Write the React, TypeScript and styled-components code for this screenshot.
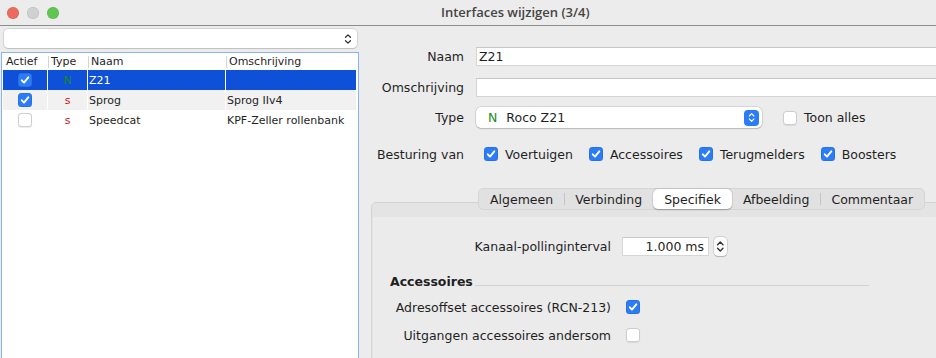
import styled, { createGlobalStyle } from "styled-components";

const GlobalStyle = createGlobalStyle`
  html, body {
    margin: 0;
    padding: 0;
    background: #ececec;
  }
  body {
    font-family: "DejaVu Sans", "Noto Sans", sans-serif;
    color: #1f1f1f;
  }
  * {
    box-sizing: border-box;
  }
`;

const Window = styled.div`
  width: 936px;
  height: 358px;
  overflow: hidden;
  display: flex;
  flex-direction: column;
  background: #ececec;
`;

const TitleBar = styled.header`
  flex: none;
  height: 26px;
  display: flex;
  align-items: center;
  padding-left: 7px;
  border-bottom: 1px solid #8d8d8d;
`;

const Lights = styled.div`
  display: flex;
  gap: 8px;
`;

const Light = styled.span<{ $color: string }>`
  width: 12px;
  height: 12px;
  border-radius: 50%;
  background: ${(p) => p.$color};
  box-shadow: inset 0 0 0 0.5px rgba(0, 0, 0, 0.12);
`;

const Title = styled.h1`
  margin: 0 0 1px 382px;
  font-family: "Open Sans", sans-serif;
  font-weight: 600;
  font-size: 13px;
  color: #444;
`;

const Body = styled.div`
  flex: 1;
  display: flex;
  min-height: 0;
`;

/* ---------- left: interface list ---------- */

const Sidebar = styled.aside`
  width: 360px;
  flex: none;
  display: flex;
  flex-direction: column;
  padding: 3px 1px 0;
`;

const FilterSelect = styled.div`
  flex: none;
  height: 19px;
  margin: 0 2px 0 3px;
  background: #fff;
  border-radius: 4px;
  box-shadow: 0 0 0 0.5px rgba(0, 0, 0, 0.2), 0 1px 1px rgba(0, 0, 0, 0.1);
  display: flex;
  align-items: center;
  justify-content: flex-end;
  padding-right: 5px;
`;

const Table = styled.div`
  flex: 1;
  margin: 4px 0 -6px;
  background: #fff;
  border: 1px solid #86b5f1;
  padding: 0 2px 0 1px;
`;

const Row = styled.div<{ $header?: boolean; $bg?: string }>`
  display: grid;
  grid-template-columns: 45px 40px 138px 1fr;
  height: ${(p) => (p.$header ? "17px" : "20px")};
  background: ${(p) => p.$bg || "#fff"};
  color: ${(p) => (p.$bg === "#0f50d8" ? "#fff" : "#1f1f1f")};
`;

const HeadCell = styled.div<{ $divider?: boolean }>`
  display: flex;
  align-items: center;
  padding-left: 3px;
  font-size: 11px;
  white-space: nowrap;
  background: ${(p) =>
    p.$divider
      ? "linear-gradient(#d4d4d4, #d4d4d4) no-repeat left center / 1px 12px"
      : "none"};
`;

const Cell = styled.div<{ $center?: boolean }>`
  display: flex;
  align-items: center;
  justify-content: ${(p) => (p.$center ? "center" : "flex-start")};
  padding-left: ${(p) => (p.$center ? "0" : "1px")};
  font-size: 11px;
  white-space: nowrap;
  overflow: hidden;
  border-right: 1px solid #fff;

  &:last-child {
    border-right: 0;
  }
`;

const TypeMark = styled.span<{ $kind: "N" | "s"; $size?: number }>`
  font-size: ${(p) => p.$size || 11}px;
  color: ${(p) => (p.$kind === "N" ? "#1c8a24" : "#c4161c")};
`;

/* ---------- shared controls ---------- */

const Box = styled.span<{ $checked?: boolean }>`
  flex: none;
  width: 14px;
  height: 14px;
  border-radius: 3.5px;
  display: inline-flex;
  align-items: center;
  justify-content: center;
  background: ${(p) => (p.$checked ? "#2b7cf6" : "#fff")};
  box-shadow: ${(p) =>
    p.$checked
      ? "inset 0 0 0 0.5px rgba(0,0,0,0.15)"
      : "inset 0 0 0 1px #cdcdcd, 0 0.5px 1px rgba(0,0,0,0.08)"};
`;

function CheckBox({ checked }: { checked?: boolean }) {
  return (
    <Box $checked={checked}>
      {checked && (
        <svg width="10" height="10" viewBox="0 0 10 10">
          <path
            d="M1.8 5.3 L4 7.6 L8.3 2.3"
            fill="none"
            stroke="#fff"
            strokeWidth="1.9"
            strokeLinecap="round"
            strokeLinejoin="round"
          />
        </svg>
      )}
    </Box>
  );
}

function UpDown({ color = "#333", size = 12 }: { color?: string; size?: number }) {
  return (
    <svg width={size * 0.66} height={size} viewBox="0 0 8 12">
      <path
        d="M1.5 4.3 L4 1.8 L6.5 4.3 M1.5 7.7 L4 10.2 L6.5 7.7"
        fill="none"
        stroke={color}
        strokeWidth="1.3"
        strokeLinecap="round"
        strokeLinejoin="round"
      />
    </svg>
  );
}

/* ---------- right: details ---------- */

const Main = styled.main`
  flex: 1;
  min-width: 0;
  display: flex;
  flex-direction: column;
  padding: 21px 0 0 11px;
  font-size: 12.5px;
`;

const FormRow = styled.div<{ $top?: number; $h: number }>`
  display: grid;
  grid-template-columns: 93px 1fr;
  column-gap: 12px;
  align-items: center;
  height: ${(p) => p.$h}px;
  margin-top: ${(p) => p.$top || 0}px;
`;

const Label = styled.label`
  justify-self: end;
  white-space: nowrap;
`;

const TextField = styled.div`
  height: 100%;
  margin-right: -8px;
  background: #fff;
  border: 1px solid #d4d4d4;
  border-top-color: #c6c6c6;
  display: flex;
  align-items: center;
  padding-left: 2px;
`;

const Inline = styled.div<{ $gap: number; $pad?: number }>`
  display: flex;
  align-items: center;
  gap: ${(p) => p.$gap}px;
  padding-left: ${(p) => p.$pad || 0}px;
`;

const Combo = styled.div`
  width: 286px;
  height: 21px;
  background: #fff;
  border-radius: 5px;
  box-shadow: 0 0 0 0.5px rgba(0, 0, 0, 0.18), 0 1px 1.5px rgba(0, 0, 0, 0.14);
  display: flex;
  align-items: center;
  padding: 0 3px 0 12px;
  gap: 9px;
`;

const ComboText = styled.span`
  flex: 1;
`;

const ComboButton = styled.span`
  width: 15px;
  height: 16px;
  border-radius: 4px;
  background: #2b7cf6;
  display: flex;
  align-items: center;
  justify-content: center;
`;

const CheckItem = styled.span`
  display: inline-flex;
  align-items: center;
  gap: 7px;
  white-space: nowrap;
`;

const Tabs = styled.div`
  position: relative;
  z-index: 1;
  align-self: flex-start;
  display: flex;
  height: 22px;
  margin: 25px 0 -8px 107px;
  padding: 1px;
  border-radius: 6px;
  background: #e1e1e1;
  box-shadow: inset 0 0 0 0.5px rgba(0, 0, 0, 0.1);
`;

const Tab = styled.span<{ $active?: boolean; $divider?: boolean }>`
  display: flex;
  align-items: center;
  padding: 0 11px;
  border-radius: 5px;
  white-space: nowrap;
  background: ${(p) =>
    p.$active
      ? "#fff"
      : p.$divider
      ? "linear-gradient(#c4c4c4, #c4c4c4) no-repeat left center / 1px 12px"
      : "none"};
  box-shadow: ${(p) =>
    p.$active ? "0 0.5px 1.5px rgba(0,0,0,0.28), 0 0 0 0.5px rgba(0,0,0,0.06)" : "none"};
`;

const Panel = styled.section`
  flex: 1;
  display: flex;
  margin: 0 -12px -8px 0;
  padding-top: 14px;
  border: 1px solid #d3d3d3;
  border-radius: 5px;
  background: #e4e4e4;
`;

const PanelInner = styled.div`
  flex: 1;
  margin-left: 1px;
  padding: 19px 0 0 17px;
  background: #ebebeb;
  display: flex;
  flex-direction: column;
`;

const SettingRow = styled.div<{ $top?: number }>`
  display: grid;
  grid-template-columns: 221px auto;
  column-gap: 11px;
  align-items: center;
  justify-content: start;
  height: 20px;
  margin-top: ${(p) => p.$top || 0}px;
`;

const Spinner = styled.div`
  display: flex;
  align-items: center;
  gap: 5px;
`;

const SpinnerField = styled.div`
  width: 87px;
  height: 19px;
  background: #fff;
  border: 1px solid #d6d6d6;
  border-top-color: #c8c8c8;
  display: flex;
  align-items: center;
  justify-content: flex-end;
  padding-right: 4px;
`;

const SpinnerButton = styled.span`
  width: 13px;
  height: 19px;
  border-radius: 4px;
  background: #fbfbfb;
  box-shadow: 0 0 0 0.5px rgba(0, 0, 0, 0.2), 0 0.5px 1px rgba(0, 0, 0, 0.15);
  display: flex;
  align-items: center;
  justify-content: center;
`;

const SectionHeading = styled.div`
  width: 479px;
  height: 15px;
  margin-top: 18px;
  display: flex;
  align-items: flex-end;
  gap: 2px;
  font-weight: bold;
  line-height: 15px;

  &::after {
    content: "";
    flex: 1;
    height: 1px;
    margin-bottom: 3px;
    background: #d2d2d2;
  }
`;

const CheckCell = styled.span`
  display: flex;
  padding-left: 4px;
`;

const interfaces = [
  { active: true, type: "N" as const, name: "Z21", desc: "" },
  { active: true, type: "s" as const, name: "Sprog", desc: "Sprog IIv4" },
  { active: false, type: "s" as const, name: "Speedcat", desc: "KPF-Zeller rollenbank" },
];

const controls = ["Voertuigen", "Accessoires", "Terugmelders", "Boosters"];
const tabs = ["Algemeen", "Verbinding", "Specifiek", "Afbeelding", "Commentaar"];
const activeTab = 2;

export default function App() {
  return (
    <>
      <GlobalStyle />
      <Window>
        <TitleBar>
          <Lights>
            <Light $color="#ee6a5f" />
            <Light $color="#d0cfd1" />
            <Light $color="#61c554" />
          </Lights>
          <Title>Interfaces wijzigen (3/4)</Title>
        </TitleBar>

        <Body>
          <Sidebar>
            <FilterSelect>
              <UpDown />
            </FilterSelect>
            <Table>
              <Row $header>
                <HeadCell>Actief</HeadCell>
                <HeadCell $divider>Type</HeadCell>
                <HeadCell $divider>Naam</HeadCell>
                <HeadCell $divider>Omschrijving</HeadCell>
              </Row>
              {interfaces.map((it, i) => (
                <Row
                  key={it.name}
                  $bg={i === 0 ? "#0f50d8" : i % 2 === 1 ? "#f1f1f1" : "#fff"}
                >
                  <Cell $center>
                    <CheckBox checked={it.active} />
                  </Cell>
                  <Cell $center>
                    <TypeMark $kind={it.type}>{it.type}</TypeMark>
                  </Cell>
                  <Cell>{it.name}</Cell>
                  <Cell>{it.desc}</Cell>
                </Row>
              ))}
            </Table>
          </Sidebar>

          <Main>
            <FormRow $h={19}>
              <Label>Naam</Label>
              <TextField>Z21</TextField>
            </FormRow>
            <FormRow $h={19} $top={12}>
              <Label>Omschrijving</Label>
              <TextField />
            </FormRow>
            <FormRow $h={21} $top={10}>
              <Label>Type</Label>
              <Inline $gap={21}>
                <Combo>
                  <TypeMark $kind="N" $size={12.5}>
                    N
                  </TypeMark>
                  <ComboText>Roco Z21</ComboText>
                  <ComboButton>
                    <UpDown color="#fff" size={11} />
                  </ComboButton>
                </Combo>
                <CheckItem>
                  <CheckBox />
                  Toon alles
                </CheckItem>
              </Inline>
            </FormRow>
            <FormRow $h={18} $top={17}>
              <Label>Besturing van</Label>
              <Inline $gap={16} $pad={8}>
                {controls.map((c) => (
                  <CheckItem key={c}>
                    <CheckBox checked />
                    {c}
                  </CheckItem>
                ))}
              </Inline>
            </FormRow>

            <Tabs>
              {tabs.map((t, i) => (
                <Tab
                  key={t}
                  $active={i === activeTab}
                  $divider={i > 0 && i !== activeTab && i - 1 !== activeTab}
                >
                  {t}
                </Tab>
              ))}
            </Tabs>
            <Panel>
              <PanelInner>
                <SettingRow>
                  <Label>Kanaal-pollinginterval</Label>
                  <Spinner>
                    <SpinnerField>1.000 ms</SpinnerField>
                    <SpinnerButton>
                      <UpDown size={13} />
                    </SpinnerButton>
                  </Spinner>
                </SettingRow>
                <SectionHeading>Accessoires</SectionHeading>
                <SettingRow $top={8}>
                  <Label>Adresoffset accessoires (RCN-213)</Label>
                  <CheckCell>
                    <CheckBox checked />
                  </CheckCell>
                </SettingRow>
                <SettingRow $top={8}>
                  <Label>Uitgangen accessoires andersom</Label>
                  <CheckCell>
                    <CheckBox />
                  </CheckCell>
                </SettingRow>
              </PanelInner>
            </Panel>
          </Main>
        </Body>
      </Window>
    </>
  );
}
